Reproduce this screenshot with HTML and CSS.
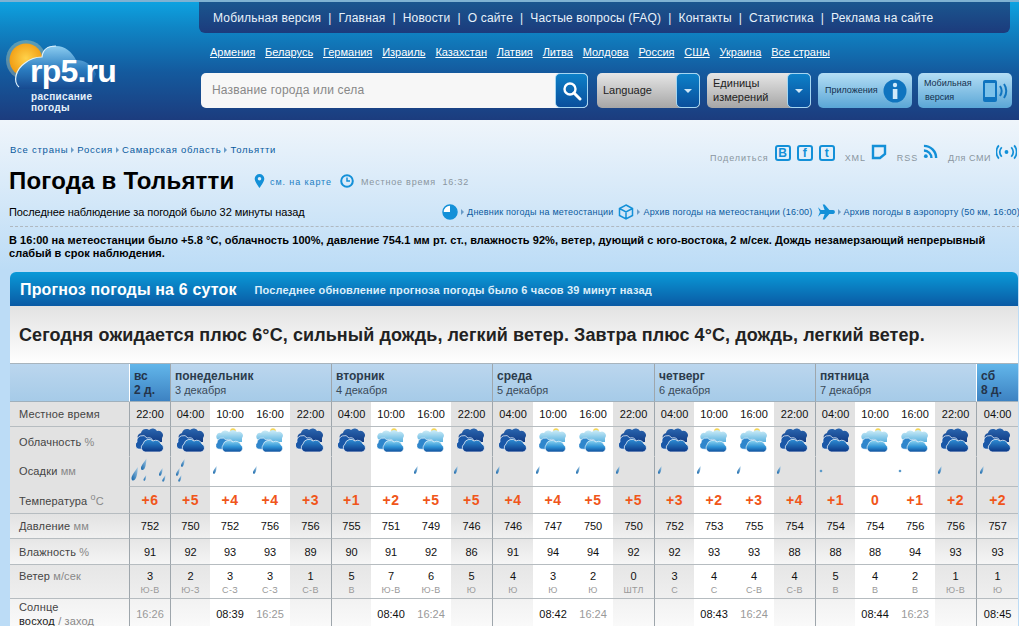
FILE: index.html
```html
<!DOCTYPE html>
<html lang="ru">
<head>
<meta charset="utf-8">
<title>Погода в Тольятти</title>
<link rel="stylesheet" href="styles.css">
</head>
<body>
<svg class="defs" width="0" height="0" aria-hidden="true">
  <defs>
    <linearGradient id="gDark" x1="0" y1="0" x2="0" y2="1"><stop offset="0" stop-color="#2f8fd6"/><stop offset="1" stop-color="#0a3584"/></linearGradient>
    <linearGradient id="gBack" x1="0" y1="0" x2="0" y2="1"><stop offset="0" stop-color="#2a66b0"/><stop offset="1" stop-color="#123c84"/></linearGradient>
    <linearGradient id="gLight" x1="0" y1="0" x2="0" y2="1"><stop offset="0" stop-color="#8fd6f2"/><stop offset=".55" stop-color="#2f93d6"/><stop offset="1" stop-color="#0f4f9c"/></linearGradient>
    <linearGradient id="gPale" x1="0" y1="0" x2="0" y2="1"><stop offset="0" stop-color="#cfeef8"/><stop offset="1" stop-color="#5cb2e0"/></linearGradient>
    <linearGradient id="gDrop" x1="1" y1="0" x2="0" y2="1"><stop offset="0" stop-color="#a9cde6"/><stop offset="1" stop-color="#0f62a8"/></linearGradient>
    <linearGradient id="gCloudLogo" x1="0" y1="0" x2="0" y2="1"><stop offset="0" stop-color="#8ccdf0"/><stop offset=".55" stop-color="#2a7cc0"/><stop offset="1" stop-color="#174a90"/></linearGradient>
    <radialGradient id="gSun" cx=".5" cy=".45" r=".55"><stop offset="0" stop-color="#ffd24a"/><stop offset="1" stop-color="#f09a10"/></radialGradient>
    <symbol id="cloudDark" viewBox="0 0 28 24">
      <path d="M3 12A4 4 0 0 1 5 5 5 5 0 0 1 13 2 5 5 0 0 1 21 3 4.500 4.500 0 0 1 26 10L26 14 3 14Z" fill="url(#gBack)"/>
      <path d="M2 21A4 4 0 0 1 1 14 5.500 5.500 0 0 1 11 10 5 5 0 0 1 17 13L14 22Z" fill="#1a58a8" stroke="#fff" stroke-width=".7"/>
      <path d="M9 24A4.500 4.500 0 0 1 7 16 6 6 0 0 1 17 13 5.500 5.500 0 0 1 25 16 4.200 4.200 0 0 1 24 24Z" fill="url(#gDark)" stroke="#fff" stroke-width=".7"/>
    </symbol>
    <symbol id="cloudLight" viewBox="0 0 28 24">
      <circle cx="17" cy="3" r="2.800" fill="#f5d65a"/>
      <path d="M3 12A3.500 3.500 0 0 1 5 5 5 5 0 0 1 13 4 5 5 0 0 1 21 4 4 4 0 0 1 26 10L26 14 3 14Z" fill="url(#gPale)"/>
      <path d="M2 21A3.500 3.500 0 0 1 1 15 5 5 0 0 1 10 12 5 5 0 0 1 17 14L14 22Z" fill="#2f86cc" stroke="#fff" stroke-width=".6"/>
      <path d="M9 24A4.500 4.500 0 0 1 7 17 6 6 0 0 1 17 14 5.500 5.500 0 0 1 25 17 4 4 0 0 1 24 24Z" fill="url(#gLight)" stroke="#fff" stroke-width=".6"/>
    </symbol>
    <symbol id="drop" viewBox="0 0 10 20">
      <path d="M9 0C9 5 8 15 5 18 3 20 0 20 0 16 0 12 6 5 9 0Z" fill="url(#gDrop)"/>
    </symbol>
    <symbol id="rainSmall" viewBox="0 0 40 29">
      <use href="#drop" x="3" y="9" width="4" height="8"/>
    </symbol>
    <symbol id="rainDot" viewBox="0 0 40 29">
      <circle cx="5" cy="14" r="1.300" fill="#5b9ac9"/>
    </symbol>
    <symbol id="rainMed" viewBox="0 0 40 29">
      <use href="#drop" x="5" y="11" width="4" height="8"/>
      <use href="#drop" x="10" y="2" width="4" height="8"/>
      <use href="#drop" x="7" y="18" width="4" height="7"/>
    </symbol>
    <symbol id="rainBig" viewBox="0 0 40 29">
      <use href="#drop" x="1" y="10" width="8" height="14"/>
      <use href="#drop" x="11" y="1" width="6" height="13"/>
      <use href="#drop" x="13" y="18" width="4" height="6"/>
      <use href="#drop" x="29" y="11" width="4" height="8"/>
      <use href="#drop" x="32" y="18" width="4" height="7"/>
    </symbol>
  </defs>
</svg>

<header class="top">
  <a class="logo" href="#">
    <svg class="logo-art" viewBox="0 0 120 80" width="120" height="80" aria-hidden="true">
      <circle cx="26" cy="30" r="20" fill="#fff3b0" opacity=".3"/>
      <circle cx="26" cy="30" r="16.500" fill="url(#gSun)"/>
      <path d="M22 59C14 59 13 42 25 33 30 29 37 27 42 27 43 17 50 16 56 16 65 16 72 22 76 30 84 30 92 34 96 44L90 59Z" fill="url(#gCloudLogo)"/>
      <path d="M19 57C13 52 15 40 25 33 30 29 37 27 42 27 43 17 50 16 56 16" fill="none" stroke="#dff2fc" stroke-width="1.200"/>
    </svg>
    <span class="logo-name">rp5.ru</span>
    <span class="logo-sub">расписание<br>погоды</span>
  </a>
  <div class="top-main">
    <nav class="nav">
      <a href="#">Мобильная версия</a><i>|</i><a href="#">Главная</a><i>|</i><a href="#">Новости</a><i>|</i><a href="#">О сайте</a><i>|</i><a href="#">Частые вопросы (FAQ)</a><i>|</i><a href="#">Контакты</a><i>|</i><a href="#">Статистика</a><i>|</i><a href="#">Реклама на сайте</a>
    </nav>
    <div class="countries">
      <a href="#">Армения</a><a href="#">Беларусь</a><a href="#">Германия</a><a href="#">Израиль</a><a href="#">Казахстан</a><a href="#">Латвия</a><a href="#">Литва</a><a href="#">Молдова</a><a href="#">Россия</a><a href="#">США</a><a href="#">Украина</a><a href="#">Все страны</a>
    </div>
    <div class="controls">
      <div class="search">
        <span class="search-text">Название города или села</span>
        <span class="blue-btn search-btn">
          <svg viewBox="0 0 20 20" width="20" height="20" aria-hidden="true"><circle cx="8" cy="8" r="5.500" fill="none" stroke="#fff" stroke-width="2.400"/><path d="M12 12l6 6" stroke="#fff" stroke-width="3" stroke-linecap="round"/></svg>
        </span>
      </div>
      <div class="select sel-lang"><span class="sel-text">Language</span><span class="blue-btn arrow-btn"><b class="arrow"></b></span></div>
      <div class="select sel-unit"><span class="sel-text">Единицы<br>измерений</span><span class="blue-btn arrow-btn"><b class="arrow"></b></span></div>
      <a class="promo promo-apps" href="#"><span>Приложения</span>
        <svg viewBox="0 0 24 24" width="24" height="24" aria-hidden="true"><circle cx="12" cy="12" r="11.500" fill="#0f74bf"/><circle cx="12" cy="6" r="2.200" fill="#cfeafa"/><rect x="9.800" y="10" width="4.600" height="10" fill="#cfeafa"/></svg>
      </a>
      <a class="promo promo-mob" href="#"><span>Мобильная<br><em>версия</em></span>
        <svg viewBox="0 0 28 24" width="28" height="24" aria-hidden="true"><rect x="1" y="1" width="14" height="22" rx="2" fill="#0f74bf"/><rect x="3" y="4" width="10" height="14" fill="#7cc2ea"/><path d="M18 7c2 3 2 7 0 10M22 5c3 4 3 10 0 14" fill="none" stroke="#0f74bf" stroke-width="2"/></svg>
      </a>
    </div>
  </div>
</header>

<main class="page">
  <div class="crumbs-row">
    <div class="crumbs"><a href="#">Все страны</a><b></b><a href="#">Россия</a><b></b><a href="#">Самарская область</a><b></b><a href="#">Тольятти</a></div>
    <div class="share">
      <span class="share-t">Поделиться</span>
      <a class="soc" href="#">B</a><a class="soc" href="#">f</a><a class="soc" href="#">t</a>
      <span class="share-t gap-l">XML</span>
      <svg viewBox="0 0 16 16" width="16" height="16" aria-hidden="true"><path d="M2 2h12v8l-5 4H2Z" fill="none" stroke="#1390d8" stroke-width="2.400"/></svg>
      <span class="share-t gap-l">RSS</span>
      <svg viewBox="0 0 16 16" width="15" height="15" aria-hidden="true"><circle cx="3" cy="13" r="2" fill="#1390d8"/><path d="M1 7a8 8 0 0 1 8 8M1 2a13 13 0 0 1 13 13" fill="none" stroke="#1390d8" stroke-width="2.600"/></svg>
      <span class="share-t gap-l smi">Для СМИ</span>
      <svg viewBox="0 0 22 16" width="21" height="16" aria-hidden="true"><circle cx="11" cy="8" r="2" fill="#1390d8"/><path d="M6 3c-2.500 3-2.500 7 0 10M16 3c2.500 3 2.500 7 0 10M3 1C-.5 5-.5 11 3 15M19 1c3.500 4 3.500 10 0 14" fill="none" stroke="#1390d8" stroke-width="1.800"/></svg>
    </div>
  </div>

  <div class="title-row">
    <h1>Погода в Тольятти</h1>
    <svg class="ic-pin" viewBox="0 0 12 16" width="11" height="14" aria-hidden="true"><path d="M6 0a5.500 5.500 0 0 1 5.500 5.500C11.500 9 6 16 6 16S.5 9 .5 5.500A5.500 5.500 0 0 1 6 0Z" fill="#1390d8"/><circle cx="6" cy="5.500" r="2" fill="#dcecf9"/></svg>
    <a class="map-link" href="#">см. на карте</a>
    <svg class="ic-clock" viewBox="0 0 14 14" width="14" height="14" aria-hidden="true"><circle cx="7" cy="7" r="5.800" fill="none" stroke="#1390d8" stroke-width="2"/><path d="M7 3.500V7h3" fill="none" stroke="#1390d8" stroke-width="1.500"/></svg>
    <span class="local">Местное время&nbsp; 16:32</span>
  </div>

  <div class="obs-row">
    <span class="obs">Последнее наблюдение за погодой было 32 минуты назад</span>
    <div class="archives">
      <svg viewBox="0 0 16 16" width="16" height="16" aria-hidden="true"><circle cx="8" cy="8" r="7" fill="#fff" stroke="#1390d8" stroke-width="1.500"/><path d="M8 8V1a7 7 0 1 1-7 7Z" fill="#1390d8"/></svg>
      <a href="#"><b></b>Дневник погоды на метеостанции</a>
      <svg class="ic-gap" viewBox="0 0 16 16" width="16" height="16" aria-hidden="true"><path d="M8 1l6.500 3.500v7L8 15l-6.500-3.500v-7ZM1.500 4.500L8 8l6.500-3.500M8 8v7" fill="none" stroke="#1390d8" stroke-width="1.500"/></svg>
      <a href="#"><b></b>Архив погоды на метеостанции (16:00)</a>
      <svg class="ic-gap" viewBox="0 0 18 16" width="17" height="16" aria-hidden="true"><path d="M0 3l2 5-2 5 3-3h4L5 16h2l5-6h4c2.500 0 2.500-4 0-4h-4L7 0H5l2 6H3Z" fill="#1390d8"/></svg>
      <a href="#"><b></b>Архив погоды в аэропорту (50 км, 16:00)</a>
    </div>
  </div>

  <p class="now">В 16:00 на метеостанции было +5.8 °С, облачность 100%, давление 754.1 мм рт. ст., влажность 92%, ветер, дующий с юго-востока, 2 м/сек. Дождь незамерзающий непрерывный слабый в срок наблюдения.</p>

  <section class="forecast">
    <div class="fc-head"><h2>Прогноз погоды на 6 суток</h2><span>Последнее обновление прогноза погоды было 6 часов 39 минут назад</span></div>
    <div class="fc-summary">Сегодня ожидается плюс 6°С, сильный дождь, легкий ветер. Завтра плюс 4°С, дождь, легкий ветер.</div>
    <table class="fc">
      <colgroup>
        <col class="c-label"><col class="c-41">
        <col class="c-40"><col class="c-40"><col class="c-40"><col class="c-41">
        <col class="c-40"><col class="c-40"><col class="c-40"><col class="c-41">
        <col class="c-41"><col class="c-40"><col class="c-40"><col class="c-41">
        <col class="c-40"><col class="c-40"><col class="c-40"><col class="c-41">
        <col class="c-40"><col class="c-40"><col class="c-40"><col class="c-41">
        <col class="c-42">
      </colgroup>
      <tr class="r-head">
        <th class="h-label"></th>
        <th class="h-short ds">вс<br>2 д.</th>
        <th class="ds" colspan="4">понедельник<small>3 декабря</small></th>
        <th class="ds" colspan="4">вторник<small>4 декабря</small></th>
        <th class="ds" colspan="4">среда<small>5 декабря</small></th>
        <th class="ds" colspan="4">четверг<small>6 декабря</small></th>
        <th class="ds" colspan="4">пятница<small>7 декабря</small></th>
        <th class="h-short ds">сб<br>8 д.</th>
      </tr>
      <tr class="r-time">
        <td class="lbl">Местное время</td>
        <td class="ds g">22:00</td>
        <td class="ds g">04:00</td><td>10:00</td><td>16:00</td><td class="g">22:00</td>
        <td class="ds g">04:00</td><td>10:00</td><td>16:00</td><td class="g">22:00</td>
        <td class="ds g">04:00</td><td>10:00</td><td>16:00</td><td class="g">22:00</td>
        <td class="ds g">04:00</td><td>10:00</td><td>16:00</td><td class="g">22:00</td>
        <td class="ds g">04:00</td><td>10:00</td><td>16:00</td><td class="g">22:00</td>
        <td class="ds g">04:00</td>
      </tr>
      <tr class="r-cloud">
        <td class="lbl">Облачность <u>%</u></td>
        <td class="ds g"><svg class="cl"><use href="#cloudDark"/></svg></td>
        <td class="ds g"><svg class="cl"><use href="#cloudDark"/></svg></td><td><svg class="cl"><use href="#cloudLight"/></svg></td><td><svg class="cl"><use href="#cloudLight"/></svg></td><td class="g"><svg class="cl"><use href="#cloudDark"/></svg></td>
        <td class="ds g"><svg class="cl"><use href="#cloudDark"/></svg></td><td><svg class="cl"><use href="#cloudLight"/></svg></td><td><svg class="cl"><use href="#cloudLight"/></svg></td><td class="g"><svg class="cl"><use href="#cloudDark"/></svg></td>
        <td class="ds g"><svg class="cl"><use href="#cloudDark"/></svg></td><td><svg class="cl"><use href="#cloudLight"/></svg></td><td><svg class="cl"><use href="#cloudLight"/></svg></td><td class="g"><svg class="cl"><use href="#cloudDark"/></svg></td>
        <td class="ds g"><svg class="cl"><use href="#cloudDark"/></svg></td><td><svg class="cl"><use href="#cloudLight"/></svg></td><td><svg class="cl"><use href="#cloudLight"/></svg></td><td class="g"><svg class="cl"><use href="#cloudDark"/></svg></td>
        <td class="ds g"><svg class="cl"><use href="#cloudDark"/></svg></td><td><svg class="cl"><use href="#cloudLight"/></svg></td><td><svg class="cl"><use href="#cloudLight"/></svg></td><td class="g"><svg class="cl"><use href="#cloudDark"/></svg></td>
        <td class="ds g"><svg class="cl"><use href="#cloudDark"/></svg></td>
      </tr>
      <tr class="r-rain">
        <td class="lbl">Осадки <u>мм</u></td>
        <td class="ds g"><svg class="rn"><use href="#rainBig"/></svg></td>
        <td class="ds g"><svg class="rn"><use href="#rainMed"/></svg></td><td><svg class="rn"><use href="#rainSmall"/></svg></td><td><svg class="rn"><use href="#rainSmall"/></svg></td><td class="g"></td>
        <td class="ds g"></td><td></td><td><svg class="rn"><use href="#rainSmall"/></svg></td><td class="g"><svg class="rn"><use href="#rainSmall"/></svg></td>
        <td class="ds g"><svg class="rn"><use href="#rainSmall"/></svg></td><td><svg class="rn"><use href="#rainSmall"/></svg></td><td><svg class="rn"><use href="#rainSmall"/></svg></td><td class="g"><svg class="rn"><use href="#rainSmall"/></svg></td>
        <td class="ds g"><svg class="rn"><use href="#rainSmall"/></svg></td><td><svg class="rn"><use href="#rainSmall"/></svg></td><td><svg class="rn"><use href="#rainSmall"/></svg></td><td class="g"><svg class="rn"><use href="#rainSmall"/></svg></td>
        <td class="ds g"><svg class="rn"><use href="#rainDot"/></svg></td><td></td><td><svg class="rn"><use href="#rainDot"/></svg></td><td class="g"><svg class="rn"><use href="#rainSmall"/></svg></td>
        <td class="ds g"><svg class="rn"><use href="#rainSmall"/></svg></td>
      </tr>
      <tr class="r-temp">
        <td class="lbl">Температура <u><sup>о</sup>С</u></td>
        <td class="ds g">+6</td>
        <td class="ds g">+5</td><td>+4</td><td>+4</td><td class="g">+3</td>
        <td class="ds g">+1</td><td>+2</td><td>+5</td><td class="g">+5</td>
        <td class="ds g">+4</td><td>+4</td><td>+5</td><td class="g">+5</td>
        <td class="ds g">+3</td><td>+2</td><td>+3</td><td class="g">+4</td>
        <td class="ds g">+1</td><td>0</td><td>+1</td><td class="g">+2</td>
        <td class="ds g">+2</td>
      </tr>
      <tr class="r-press">
        <td class="lbl">Давление <u>мм</u></td>
        <td class="ds g">752</td>
        <td class="ds g">750</td><td>752</td><td>756</td><td class="g">756</td>
        <td class="ds g">755</td><td>751</td><td>749</td><td class="g">746</td>
        <td class="ds g">746</td><td>747</td><td>750</td><td class="g">750</td>
        <td class="ds g">752</td><td>753</td><td>755</td><td class="g">754</td>
        <td class="ds g">754</td><td>754</td><td>756</td><td class="g">756</td>
        <td class="ds g">757</td>
      </tr>
      <tr class="r-hum">
        <td class="lbl">Влажность <u>%</u></td>
        <td class="ds g">91</td>
        <td class="ds g">92</td><td>93</td><td>93</td><td class="g">89</td>
        <td class="ds g">90</td><td>91</td><td>92</td><td class="g">86</td>
        <td class="ds g">91</td><td>94</td><td>94</td><td class="g">92</td>
        <td class="ds g">92</td><td>93</td><td>93</td><td class="g">88</td>
        <td class="ds g">88</td><td>88</td><td>94</td><td class="g">93</td>
        <td class="ds g">93</td>
      </tr>
      <tr class="r-wind">
        <td class="lbl">Ветер <u>м/сек</u></td>
        <td class="ds g">3<small>Ю-В</small></td>
        <td class="ds g">2<small>Ю-З</small></td><td>3<small>С-З</small></td><td>3<small>С-З</small></td><td class="g">1<small>С-В</small></td>
        <td class="ds g">5<small>В</small></td><td>7<small>Ю-В</small></td><td>6<small>Ю-В</small></td><td class="g">5<small>Ю</small></td>
        <td class="ds g">4<small>Ю</small></td><td>3<small>Ю</small></td><td>2<small>Ю</small></td><td class="g">0<small>ШТЛ</small></td>
        <td class="ds g">3<small>С</small></td><td>4<small>С</small></td><td>4<small>С-В</small></td><td class="g">4<small>С-В</small></td>
        <td class="ds g">5<small>В</small></td><td>4<small>В</small></td><td>2<small>В</small></td><td class="g">1<small>Ю-В</small></td>
        <td class="ds g">1<small>Ю</small></td>
      </tr>
      <tr class="r-sun">
        <td class="lbl">Солнце<br><strong>восход</strong> <u>/ заход</u></td>
        <td class="ds g set">16:26</td>
        <td class="ds g"></td><td>08:39</td><td class="set">16:25</td><td class="g"></td>
        <td class="ds g"></td><td>08:40</td><td class="set">16:24</td><td class="g"></td>
        <td class="ds g"></td><td>08:42</td><td class="set">16:24</td><td class="g"></td>
        <td class="ds g"></td><td>08:43</td><td class="set">16:24</td><td class="g"></td>
        <td class="ds g"></td><td>08:44</td><td class="set">16:23</td><td class="g"></td>
        <td class="ds g">08:45</td>
      </tr>
    </table>
  </section>
</main>
</body>
</html>
```
FILE: styles.css
```css
html, body { margin: 0; padding: 0; height: 100%; overflow: hidden; }
body {
  font-family: "Liberation Sans", Arial, sans-serif;
  font-size: 11px;
  color: #000;
  background: #bcdcf6;
}
a { color: inherit; text-decoration: none; }
.defs { position: absolute; }

/* header */
.top {
  display: flex;
  height: 118px;
  border-top: 2px solid #7fb2d2;
  background: linear-gradient(#0ea2e0 0, #0f86c6 25px, #145a9e 70px, #1c3c7e 100%);
  box-shadow: 0 1px 3px #9bb5cc;
}
.logo {
  position: relative;
  display: block;
  width: 199px;
  flex: none;
  color: #fff;
}
.logo-art { position: absolute; left: 0; top: 28px; }
.logo-name {
  position: absolute;
  left: 30px;
  top: 51px;
  font: bold 32px/36px "Liberation Sans", Arial, sans-serif;
  letter-spacing: -.8px;
}
.logo-sub {
  position: absolute;
  left: 31px;
  top: 89px;
  font: bold 10px/11px "Liberation Sans", Arial, sans-serif;
  letter-spacing: .3px;
  color: #e6f2fb;
}
.top-main { flex: 1; min-width: 0; padding-right: 7px; }
.nav {
  display: flex;
  align-items: center;
  height: 31px;
  margin-right: 2px;
  padding-left: 14px;
  border-radius: 0 0 6px 6px;
  background: linear-gradient(#1a568f, #1c3b7c);
  color: #e8f2fa;
  font-size: 12px;
  letter-spacing: .17px;
}
.nav i { font-style: normal; margin: 0 7px; }
.countries {
  display: flex;
  gap: 9.8px;
  height: 20px;
  padding: 10px 0 10px 11px;
  line-height: 18px;
  color: #fff;
  font-size: 11px;
}
.countries a { text-decoration: underline; }
.controls { display: flex; height: 35px; padding-left: 2px; }
.search {
  display: flex;
  width: 387px;
  flex: none;
  border-radius: 5px;
  background: #f7f7f7;
}
.search-text {
  flex: 1;
  padding-left: 11px;
  line-height: 35px;
  font-size: 12px;
  letter-spacing: .2px;
  color: #888;
}
.blue-btn {
  display: flex;
  align-items: center;
  justify-content: center;
  box-sizing: border-box;
  flex: none;
  border: 1px solid #a4d6f2;
  border-radius: 5px;
  background: linear-gradient(#0d80c8, #0a4f9c);
}
.search-btn { width: 33px; }
.select {
  display: flex;
  align-items: stretch;
  margin-left: 9px;
  border-radius: 5px;
  background: linear-gradient(#e6e6e6, #a6a6a6);
  color: #222;
  font-size: 11px;
}
.sel-lang { width: 103px; }
.sel-unit { width: 104px; margin-left: 7px; }
.sel-text { flex: 1; padding: 0 0 2px 6px; align-self: center; line-height: 14px; }
.arrow-btn { width: 24px; }
.arrow {
  width: 0;
  height: 0;
  border: 4px solid transparent;
  border-top-color: #cfe6f6;
  border-bottom-width: 0;
}
.promo {
  display: flex;
  align-items: center;
  justify-content: space-between;
  box-sizing: border-box;
  width: 94px;
  padding: 0 5px 0 7px;
  margin-left: 7px;
  border-radius: 5px;
  background: linear-gradient(#b4def5, #5aa6d6);
  color: #12304e;
  font-size: 9px;
  line-height: 14px;
}
.promo span { padding-bottom: 2px; }
.promo em { font-style: normal; margin-left: 1px; }
.promo-mob { margin-left: 6px; padding-right: 2px; padding-left: 6px; }

/* page */
.page {
  height: 506px;
  padding-left: 10px;
  background: linear-gradient(#eff5fb 0, #bcdcf6 150px);
}
.crumbs-row {
  display: flex;
  justify-content: space-between;
  align-items: flex-start;
  box-sizing: border-box;
  height: 46px;
  padding-top: 24px;
  padding-right: 2px;
}
.crumbs {
  display: flex;
  align-items: center;
  font-size: 9.5px;
  line-height: 11px;
  letter-spacing: .75px;
  color: #0a5a9e;
}
.crumbs b, .archives b {
  display: inline-block;
  width: 0;
  height: 0;
  margin: 0 3px;
  border-left: 3px solid #6a9cc8;
  border-top: 3px solid transparent;
  border-bottom: 3px solid transparent;
}
.share {
  display: flex;
  align-items: flex-start;
  height: 18px;
  color: #8a96a0;
  font-size: 9px;
  letter-spacing: .9px;
}
.share-t { padding-top: 9px; }
.smi { letter-spacing: .55px; }
.soc {
  display: block;
  box-sizing: border-box;
  width: 16px;
  height: 16px;
  margin: 1px 0 0 6px;
  border: 2px solid #1390d8;
  border-radius: 3px;
  color: #1390d8;
  font: bold 12px/12px "Liberation Sans", Arial, sans-serif;
  letter-spacing: 0;
  text-align: center;
}
.gap-l { margin: 0 5px 0 10px; }
.title-row {
  display: flex;
  align-items: center;
  height: 30px;
  font-size: 9px;
  letter-spacing: .9px;
}
h1 {
  margin: 0 0 0 -1px;
  width: 245px;
  flex: none;
  font: bold 24px/30px "Liberation Sans", Arial, sans-serif;
  letter-spacing: .2px;
}
.map-link { margin: 2px 0 0 5px; color: #1a7fc4; }
.ic-clock { margin-left: 8px; }
.local { margin: 2px 0 0 7px; color: #8a96a0; letter-spacing: .8px; }
.obs-row {
  display: flex;
  justify-content: space-between;
  align-items: center;
  height: 31px;
  padding-top: 1px;
  margin-right: -1px;
  border-bottom: 1px dashed #b0b8c0;
  box-sizing: border-box;
}
.obs { margin-left: -1px; font-size: 11px; letter-spacing: -.08px; }
.archives {
  display: flex;
  align-items: center;
  color: #0a5a9e;
  font-size: 9px;
  letter-spacing: .2px;
}
.ic-gap { margin-left: 5px; }
.now {
  margin: 7px 0 0 -1px;
  width: 985px;
  height: 38px;
  font: bold 11px/13px "Liberation Sans", Arial, sans-serif;
  letter-spacing: .05px;
}
.forecast { width: 1008px; }
.fc-head {
  display: flex;
  align-items: center;
  box-sizing: border-box;
  height: 34px;
  padding: 1px 0 0 10px;
  border-radius: 6px 6px 0 0;
  background: linear-gradient(#0a9ad8, #0a5aa4);
  color: #fff;
}
.fc-head h2 {
  margin: 0;
  font: bold 16px/33px "Liberation Sans", Arial, sans-serif;
  letter-spacing: .15px;
}
.fc-head span {
  margin-left: 18px;
  font-size: 11px;
  font-weight: bold;
  letter-spacing: .15px;
  color: #dceefa;
}
.fc-summary {
  height: 57px;
  padding-left: 9px;
  background: linear-gradient(#e2e2e2, #fff);
  font: bold 18px/58px "Liberation Sans", Arial, sans-serif;
  letter-spacing: .09px;
  color: #222;
}

/* table */
.fc {
  width: 1008px;
  table-layout: fixed;
  border-collapse: separate;
  border-spacing: 0;
  border-top: 1px solid #a8b4bd;
  background: #fff;
  text-align: center;
  font-size: 11px;
  color: #111;
}
.c-label { width: 119px; }
.c-40 { width: 40px; }
.c-41 { width: 41px; }
.c-42 { width: 42px; }
.fc th, .fc td {
  padding: 0;
  border-bottom: 1px solid #b6bcc0;
  box-sizing: border-box;
}
.fc .ds { border-left: 1px solid #9ea6ac; }
.fc th {
  height: 38px;
  padding: 1px 0 0 4px;
  text-align: left;
  font-size: 12px;
  font-weight: bold;
  line-height: 14px;
  color: #2c3c4c;
  background: linear-gradient(#bbd6ee, #a6cbe8);
  border-bottom-color: #a0b0bc;
}
.fc th small {
  display: block;
  font-size: 11px;
  font-weight: normal;
  color: #3a4a58;
}
.fc .h-short {
  background: linear-gradient(#62b6ea, #3d82c2);
  border-left-color: #fff;
  color: #24344a;
}
.fc .h-label { background: linear-gradient(#bbd6ee, #a6cbe8); }
.fc .lbl {
  padding-left: 9px;
  text-align: left;
  color: #444;
  letter-spacing: .15px;
  background: #e2e2e2;
}
.lbl u { text-decoration: none; color: #888; }
.lbl sup { font-size: 9px; line-height: 0; }
.lbl strong { font-weight: normal; color: #222; }
.g { background: #e2e2e2; }
.fc .r-time td { height: 25px; padding-bottom: 1px; }
.r-cloud td, .r-rain .lbl { border-bottom-color: transparent; }
.r-cloud td { height: 30px; vertical-align: top; }
.r-rain td { height: 29px; vertical-align: top; }
.fc .r-cloud .lbl { vertical-align: middle; padding-top: 1px; }
.fc .r-rain .lbl { vertical-align: middle; padding-bottom: 1px; }
.cl { display: block; width: 28px; height: 24px; margin: 1px 0 0 6px; }
.rn { display: block; width: 40px; height: 29px; }
.fc .r-temp td { height: 27px; padding-bottom: 1px; font-size: 14px; font-weight: bold; color: #f0561a; letter-spacing: .5px; }
.fc .r-temp .lbl { padding-bottom: 0; padding-top: 1px; font-size: 11px; font-weight: normal; color: #444; letter-spacing: .15px; }
.fc .r-press td { height: 25px; padding-bottom: 1px; }
.r-hum td { height: 26px; }
.fc .r-wind td { height: 34px; line-height: 14px; vertical-align: top; padding-top: 4px; }
.r-wind small { display: block; font-size: 9px; line-height: 15px; color: #999; letter-spacing: .3px; }
.fc .r-sun td { height: 30px; line-height: 14px; }
.set { color: #999; }
.r-press .g, .r-press .lbl { background: linear-gradient(#e2e2e2, #f0f0f0); }
.r-hum .g, .r-hum .lbl { background: linear-gradient(#e6e6e6, #f5f5f5); }
.r-wind .g, .r-wind .lbl { background: linear-gradient(#e6e6e6, #efefef); }
.r-sun .g, .r-sun .lbl { background: linear-gradient(#f2f2f2, #fafafa); }
```
